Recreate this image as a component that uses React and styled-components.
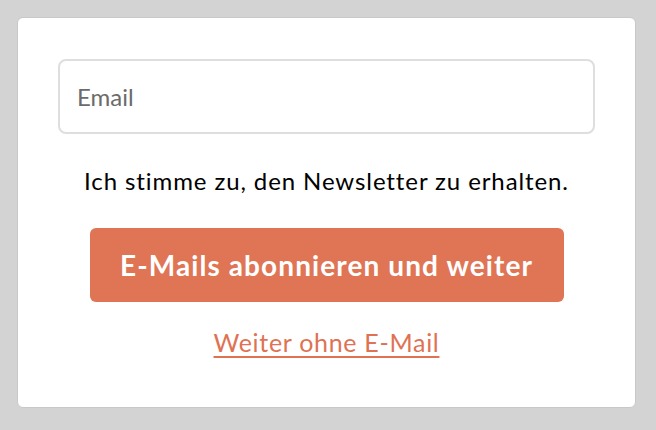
import React from "react";
import styled, { createGlobalStyle } from "styled-components";

const GlobalStyle = createGlobalStyle`
  html, body {
    margin: 0;
    background: #d3d3d3;
  }
  body {
    padding: 17px;
    font-family: Lato, "Open Sans", sans-serif;
  }
`;

const Card = styled.div`
  box-sizing: border-box;
  width: 619px;
  height: 391px;
  background: #fff;
  border: 1px solid #c8c8c8;
  border-radius: 6px;
  padding: 41px 40px 0;
  display: flex;
  flex-direction: column;
  align-items: center;
`;

const EmailInput = styled.input`
  box-sizing: border-box;
  width: 100%;
  height: 75px;
  border: 2px solid #dedede;
  border-radius: 8px;
  padding: 0 17px;
  font-family: inherit;
  font-size: 24px;
  color: #333;
  outline: none;

  &::placeholder {
    color: #6b6b6b;
  }
`;

const Consent = styled.p`
  margin: 32px 0 0;
  font-size: 24px;
  letter-spacing: 0.9px;
  line-height: 30px;
  color: #000;
`;

const SubscribeButton = styled.button`
  margin-top: 32px;
  width: 474px;
  height: 74px;
  border: none;
  border-radius: 6px;
  background: #df7555;
  color: #fff;
  font-family: inherit;
  font-weight: 700;
  font-size: 28px;
  letter-spacing: 1.1px;
  cursor: pointer;
`;

const SkipLink = styled.a`
  margin-top: 24px;
  font-size: 25px;
  letter-spacing: 0.7px;
  line-height: 32px;
  color: #e07254;
  text-decoration: underline;
  text-underline-offset: 4px;
  cursor: pointer;
`;

export default function App() {
  return (
    <>
      <GlobalStyle />
      <Card>
        <EmailInput type="email" placeholder="Email" />
        <Consent>Ich stimme zu, den Newsletter zu erhalten.</Consent>
        <SubscribeButton>E-Mails abonnieren und weiter</SubscribeButton>
        <SkipLink href="#">Weiter ohne E-Mail</SkipLink>
      </Card>
    </>
  );
}
